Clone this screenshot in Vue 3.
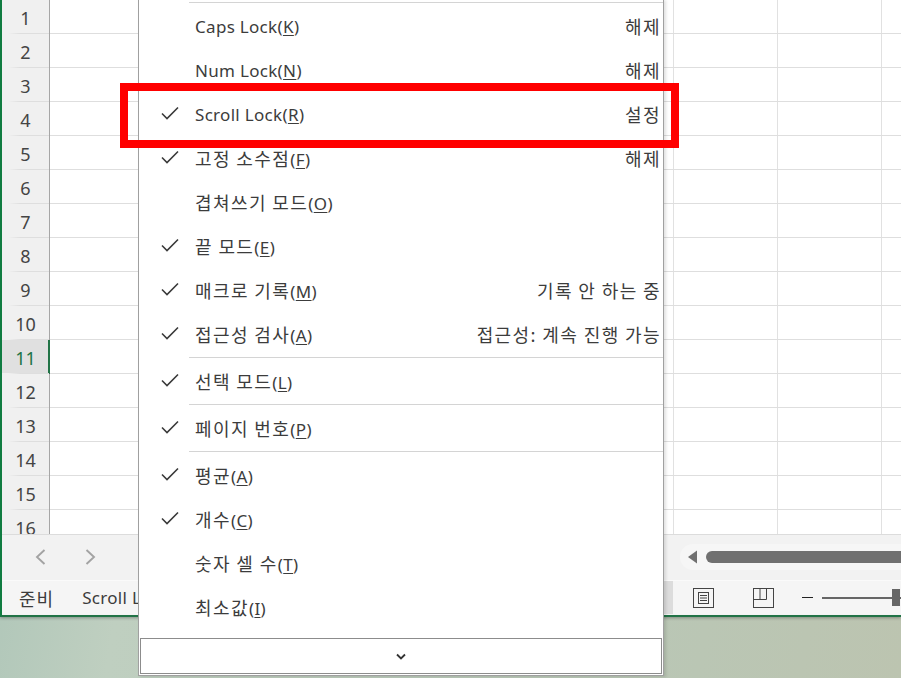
<script setup>
const rows = Array.from({ length: 16 }, (_, i) => i + 1)
const cols = [104, 104, 104, 104, 104, 104, 104, 104, 104]
const items = [
  { label: 'Caps Lock', key: 'K', value: '해제', latin: true },
  { label: 'Num Lock', key: 'N', value: '해제', latin: true },
  { label: 'Scroll Lock', key: 'R', value: '설정', on: true, latin: true },
  { label: '고정 소수점', key: 'F', value: '해제', on: true },
  { label: '겹쳐쓰기 모드', key: 'O' },
  { label: '끝 모드', key: 'E', on: true },
  { label: '매크로 기록', key: 'M', value: '기록 안 하는 중', on: true },
  { label: '접근성 검사', key: 'A', value: '접근성: 계속 진행 가능', on: true, sep: true },
  { label: '선택 모드', key: 'L', on: true, sep: true },
  { label: '페이지 번호', key: 'P', on: true, sep: true },
  { label: '평균', key: 'A', on: true },
  { label: '개수', key: 'C', on: true },
  { label: '숫자 셀 수', key: 'T' },
  { label: '최소값', key: 'I' }
]
</script>

<template>
  <div class="screen">
    <div class="window">
      <div class="sheet">
        <div class="headers">
          <div v-for="r in rows" :key="r" class="rowhead" :class="{ active: r === 11 }">{{ r }}</div>
        </div>
        <div class="cells">
          <div v-for="r in rows" :key="r" class="gridrow">
            <div v-for="(w, i) in cols" :key="i" class="cell" :style="{ width: w + 'px' }"></div>
          </div>
        </div>
      </div>
      <div class="tabbar">
        <div class="tabnav">
          <svg width="14" height="18" viewBox="0 0 14 18"><path d="M10.5 2 3 9l7.5 7" fill="none" stroke="#a3a3a3" stroke-width="1.900"/></svg>
          <svg width="14" height="18" viewBox="0 0 14 18"><path d="M3.500 2 11 9l-7.500 7" fill="none" stroke="#a3a3a3" stroke-width="1.900"/></svg>
        </div>
        <div class="scrollbar">
          <svg class="arrow" width="11" height="14" viewBox="0 0 11 14"><path d="M10 0.500V13.500L1 7Z" fill="#707070"/></svg>
          <div class="thumb"></div>
        </div>
      </div>
      <div class="status">
        <span class="ready">준비</span>
        <span class="scrolltext">Scroll Lock</span>
        <div class="statusright">
          <svg width="22" height="20" viewBox="0 0 22 20" fill="none" stroke="#444" stroke-width="1"><rect x="0.500" y="0.500" width="20" height="19"/><rect x="5.500" y="4.500" width="10" height="11"/><path d="M7 7.500h7M7 10h7M7 12.500h7"/></svg>
          <svg class="breakview" width="22" height="20" viewBox="0 0 22 20" fill="none" stroke="#444" stroke-width="1"><rect x="0.500" y="0.500" width="20" height="19"/><path d="M0.500 11.500h13V0.500M7 0.500v11"/></svg>
          <span class="minus"></span>
          <div class="zoomtrack"><span class="zoomthumb"></span></div>
        </div>
      </div>
    </div>

    <div class="menu">
      <div class="toprule"></div>
      <div class="list">
        <div v-for="(item, i) in items" :key="i" class="itemwrap">
          <div class="item">
            <span class="check">
              <svg v-if="item.on" width="18" height="14" viewBox="0 0 18 14"><path d="M1 7.500 6 12.500 17 1.500" fill="none" stroke="#3a3a3a" stroke-width="1.600"/></svg>
            </span>
            <span class="label"><span :class="item.latin ? 'latin' : 'ko'">{{ item.label }}</span><span class="key">(<u>{{ item.key }}</u>)</span></span>
            <span class="value ko">{{ item.value }}</span>
          </div>
          <div v-if="item.sep" class="sep"></div>
        </div>
      </div>
      <div class="more">
        <svg width="10" height="7" viewBox="0 0 10 7"><path d="M1 1.500 5 5.500 9 1.500" fill="none" stroke="#333" stroke-width="1.800"/></svg>
      </div>
    </div>

    <div class="highlight"></div>
  </div>
</template>

<style>
html, body { margin: 0; padding: 0; }
</style>

<style scoped>
.screen {
  position: relative;
  width: 901px;
  height: 678px;
  overflow: hidden;
  background: linear-gradient(100deg, #a6c1b4 0%, #bfcfc0 22%, #b9c7b6 70%, #bcc4b0 100%);
  font-family: "Noto Sans", "Noto Sans CJK KR", sans-serif;
  color: #3c3c3c;
}
.window {
  height: 615px;
  border-left: 2px solid #107c41;
  border-bottom: 2px solid #217346;
  background: #f3f3f3;
  display: flex;
  flex-direction: column;
  box-shadow: 0 1px 3px rgba(0, 0, 0, 0.3);
}
.sheet {
  height: 534px;
  display: flex;
  overflow: hidden;
  border-bottom: 1px solid #dcdcdc;
  background: #fff;
  flex: none;
}
.headers {
  width: 47px;
  flex: none;
  background: #f0f0f0;
  border-right: 1px solid #a6a6a6;
}
.rowhead {
  height: 33px;
  border-bottom: 1px solid transparent;
  border-image: linear-gradient(90deg, #f0f0f0 15%, #dedede 40%) 1;
  font-size: 18px;
  line-height: 36px;
  text-align: center;
  color: #444;
}
.rowhead.active {
  background: #e0e0e0;
  box-shadow: inset -1px 0 0 #217346, 1px 0 0 #217346;
  color: #217346;
}
.cells {
  flex: 1;
  min-width: 0;
  overflow: hidden;
}
.gridrow {
  height: 33px;
  border-bottom: 1px solid #dedede;
  display: flex;
  width: 940px;
}
.cell {
  height: 100%;
  flex: none;
  box-sizing: border-box;
  border-right: 1px solid #e1e1e1;
}
.tabbar {
  height: 46px;
  flex: none;
  box-sizing: border-box;
  padding-bottom: 2px;
  display: flex;
  align-items: center;
  background: #f2f2f2;
  border-bottom: 1px solid #fafafa;
}
.tabnav {
  display: flex;
  gap: 35px;
  padding-left: 32px;
}
.scrollbar {
  margin-left: auto;
  width: 221px;
  height: 26px;
  display: flex;
  align-items: center;
  gap: 8px;
  background: #f6f6f6;
  border-radius: 13px 0 0 13px;
  padding-left: 7px;
  box-sizing: border-box;
}
.arrow { flex: none; }
.thumb {
  flex: 1;
  height: 12px;
  background: #707070;
  border-radius: 6px 0 0 6px;
}
.status {
  height: 33px;
  flex: none;
  display: flex;
  align-items: center;
  background: #f5f5f5;
  font-size: 18px;
  position: relative;
}
.ready {
  margin-left: 17px;
  letter-spacing: 1px;
}
.scrolltext {
  margin-left: 28px;
  font-size: 17px;
  letter-spacing: 0.3px;
}
.statusright {
  margin-left: auto;
  display: flex;
  align-items: center;
  width: 208px;
  box-sizing: border-box;
  height: 33px;
  position: relative;
}
.statusright::before {
  content: "";
  position: absolute;
  left: -29px;
  width: 9px;
  top: 0;
  bottom: 0;
  background: #dcdcdc;
}
.breakview { margin-left: 38px; }
.minus {
  width: 11px;
  height: 1px;
  background: #222;
  margin-left: 27px;
}
.zoomtrack {
  margin-left: 9px;
  flex: 1;
  height: 2px;
  background: #666;
  position: relative;
}
.zoomthumb {
  position: absolute;
  left: 70px;
  top: -8px;
  width: 8px;
  height: 17px;
  background: #666;
}
.menu {
  position: absolute;
  left: 138px;
  top: -1px;
  width: 526px;
  height: 677px;
  box-sizing: border-box;
  background: #fff;
  border: 1px solid #a0a0a0;
  border-top: 0;
  display: flex;
  flex-direction: column;
  box-shadow: 2px 1px 3px rgba(0, 0, 0, 0.12);
}
.toprule {
  height: 1px;
  margin: 3px 0 0 50px;
  background: #d4d4d4;
  flex: none;
}
.list { flex: none; margin-top: 1px; }
.item {
  height: 44px;
  display: flex;
  align-items: center;
  font-size: 17px;
  padding-right: 2px;
}
.check {
  width: 56px;
  flex: none;
  display: flex;
  padding-left: 22px;
  box-sizing: border-box;
  margin-top: -2px;
}
.label {
  white-space: nowrap;
}
.latin {
  letter-spacing: 0.3px;
}
.ko {
  font-size: 18px;
  letter-spacing: 1.4px;
  font-family: "Noto Sans CJK KR", sans-serif;
}
.key {
  font-size: 17px;
  letter-spacing: 0.4px;
}
.value {
  margin-left: auto;
  white-space: nowrap;
}
u { text-underline-offset: 2px; text-decoration-thickness: 1px; }
.sep {
  height: 1px;
  margin: 1px 0 1px 50px;
  background: #d4d4d4;
}
.more {
  position: absolute;
  left: 1px;
  right: 1px;
  bottom: 1px;
  height: 36px;
  box-sizing: border-box;
  border: 1px solid #8c8c8c;
  display: flex;
  align-items: center;
  justify-content: center;
}
.highlight {
  position: absolute;
  left: 120px;
  top: 83px;
  width: 559px;
  height: 65px;
  box-sizing: border-box;
  border: 8px solid #ff0000;
}
</style>
